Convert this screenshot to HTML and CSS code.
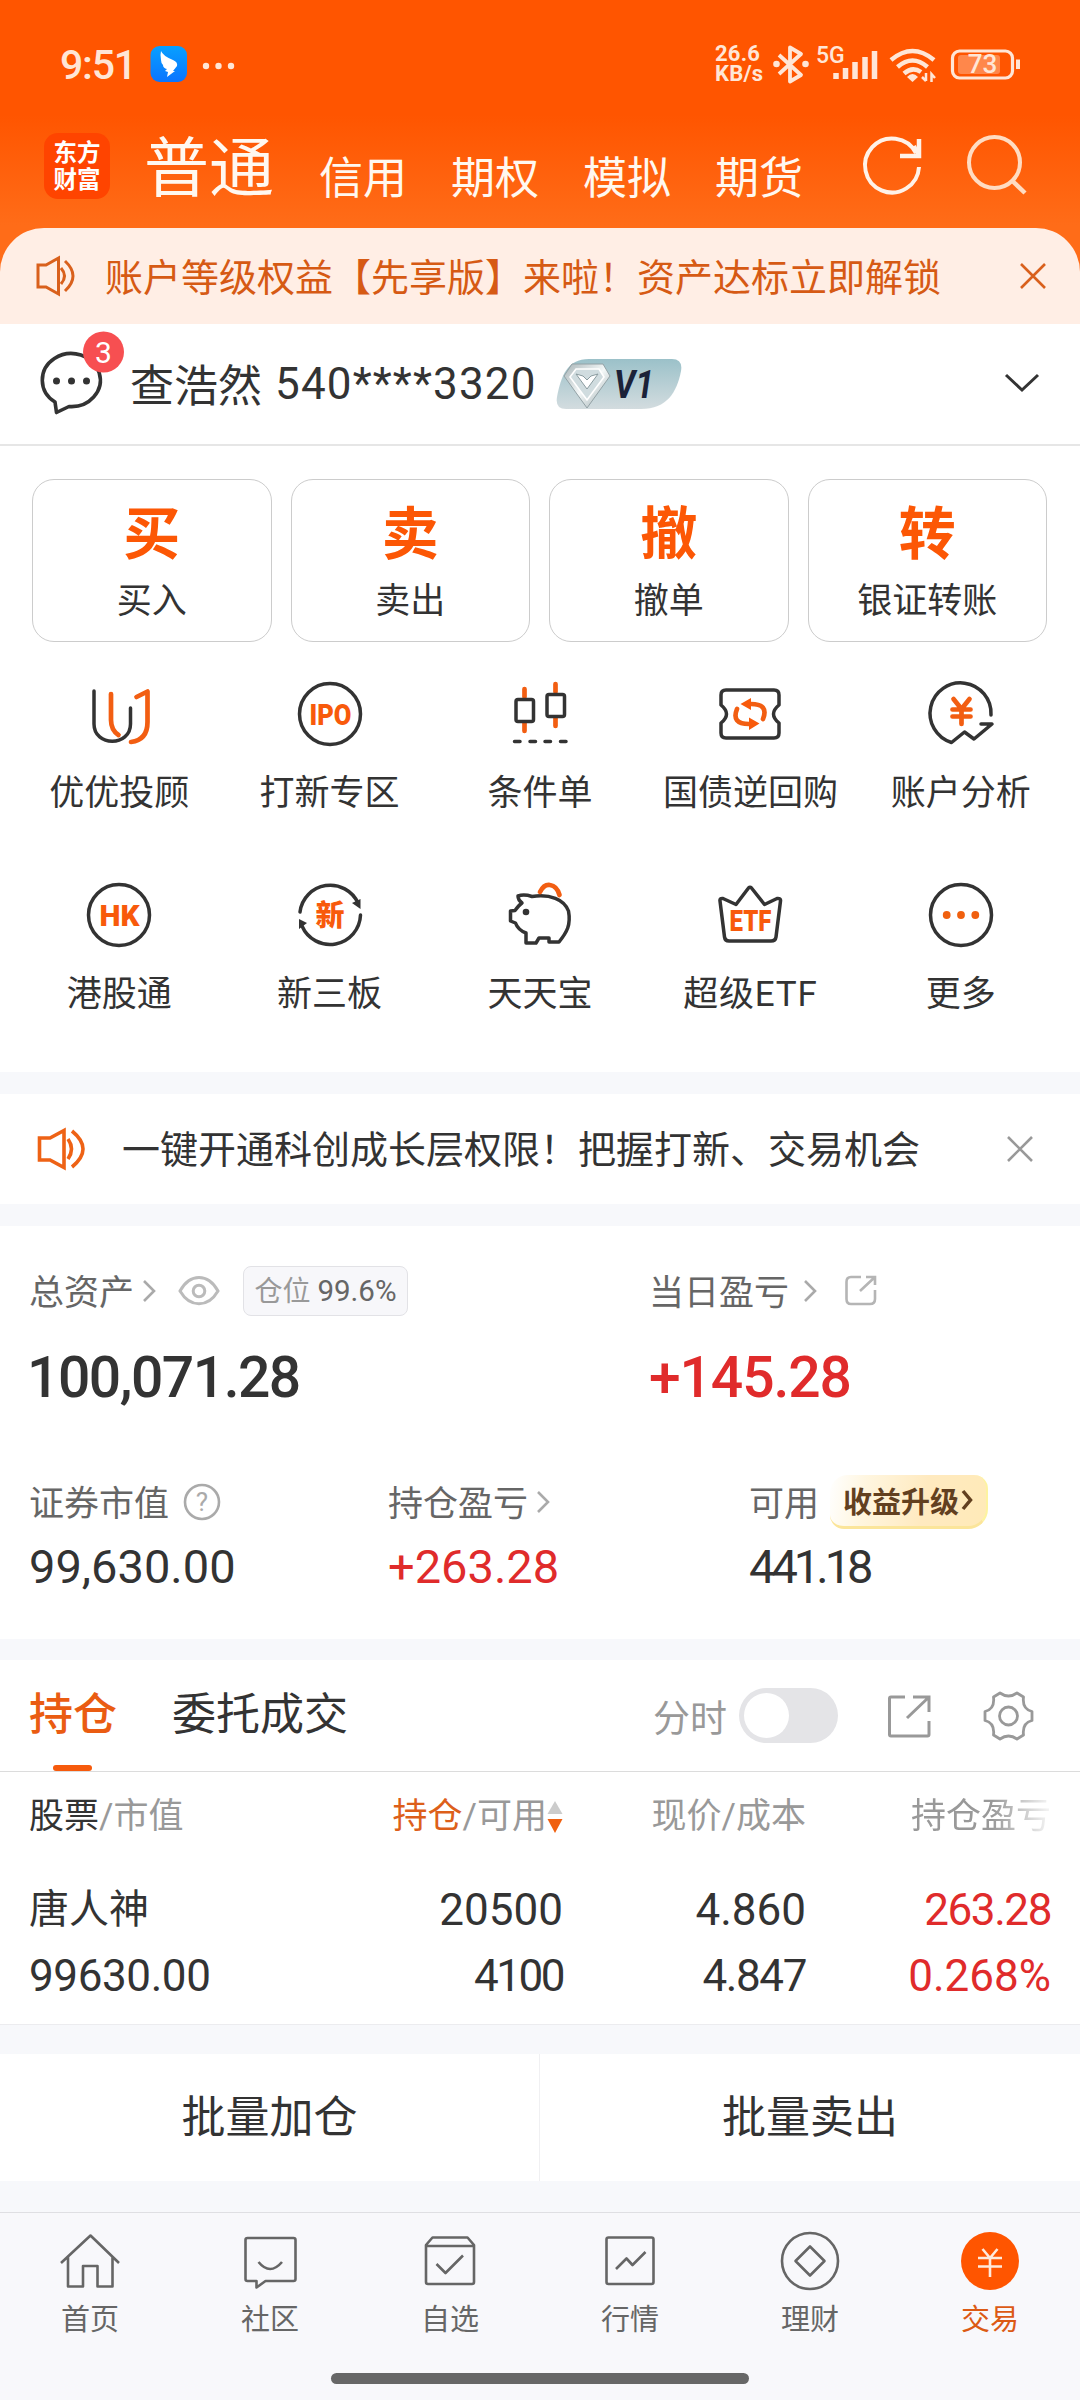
FILE: index.html
```html
<!DOCTYPE html>
<html lang="zh-CN">
<head>
<meta charset="utf-8">
<title>交易</title>
<link rel="stylesheet" href="styles.css">
</head>
<body>
<div class="app">
  <header class="header">
    <div class="status">
      <span class="clock">9:51</span>
      <svg class="ding" width="37" height="37" viewBox="150 46 37 37"><defs><linearGradient id="dg" x1="0" y1="0" x2="0" y2="1"><stop offset="0" stop-color="#08a0ff"/><stop offset="1" stop-color="#0a74ff"/></linearGradient></defs><rect x="150.500" y="46" width="36.500" height="36" rx="9" fill="url(#dg)"/><path d="M161 51Q163 56 173 60Q178 62 177 66L173 71H175L167 77L168 72L165 71L167 69Q163 68 163 65Q161 63 161 60Q160 55 161 51Z" fill="#fff"/></svg>
      <svg class="dots" width="33" height="8" viewBox="0 0 33 8" fill="#ffe6d6"><circle cx="4" cy="4" r="3.200"/><circle cx="16.500" cy="4" r="3.200"/><circle cx="29" cy="4" r="3.200"/></svg>
      <span class="speed">26.6<br>KB/s</span>
      <svg class="sig" width="250" height="44" viewBox="772 42 250 44" fill="none" stroke="#ffe6d6">
        <path d="M779 55L801 75L790 81.500V47.500L801 54L779 74" stroke-width="3.800" stroke-linejoin="round"/>
        <circle cx="776.500" cy="64" r="3.300" fill="#ffe6d6" stroke="none"/><circle cx="805.500" cy="64" r="3.300" fill="#ffe6d6" stroke="none"/>
        <text x="816" y="62.500" class="net">5G</text>
        <path d="M836 79V73M845.500 79V68M855 79V62M865 79V57M874.500 79V51" stroke-width="5.500"/>
        <path d="M891 60Q912.500 42 934 60" stroke-width="4.500"/><path d="M897.500 67Q912.500 54 927.500 67" stroke-width="4.500"/><path d="M904 73.500Q912.500 66 921 72" stroke-width="4.500"/><path d="M907 77Q912.500 71 918 77L912.500 82Z" fill="#ffe6d6" stroke="none"/>
        <path d="M926 73V81M922 77L926 81M931.500 82V74L935 78" stroke-width="2.500"/>
        <rect x="952.500" y="51" width="60" height="27" rx="7" stroke-width="3.200"/><rect x="958" y="55" width="42" height="19" rx="3" fill="#ff874b" stroke="none"/><path d="M1018 59.500V69" stroke-width="4"/>
        <text x="982.500" y="73" class="batt" text-anchor="middle">73</text>
      </svg>
    </div>
    <div class="topnav">
      <div class="logo">东方<br>财富</div>
      <span class="mode mode-on">普通</span>
      <span class="mode">信用</span><span class="mode">期权</span><span class="mode">模拟</span><span class="mode">期货</span>
      <svg class="tools" width="170" height="66" viewBox="860 133 170 66" fill="none" stroke="#fff2e8" stroke-width="4"><path d="M919 167A27 27 0 1 1 916 153"/><path d="M919 139V156H900" stroke-width="4.500"/><path d="M914 146L919 156"/><circle cx="994.500" cy="162.500" r="25.500" stroke="#ffdcc2"/><path d="M1012 180.500L1025 193" stroke="#ffdcc2" stroke-width="4.500"/></svg>
    </div>
  </header>

  <div class="promo">
    <svg width="42" height="42" viewBox="36 255 42 42" fill="none" stroke="#d9601c" stroke-width="3"><path d="M38 265H46L58.500 258V294L46 287H38Z"/><path d="M61 268Q68 276 61 284"/><path d="M65 261Q81 276 65 291"/></svg>
    <span>账户等级权益【先享版】来啦！资产达标立即解锁</span>
    <svg class="x" width="26" height="26" viewBox="0 0 26 26" stroke="#d9601c" stroke-width="2.600"><path d="M1 1L25 25M25 1L1 25"/></svg>
  </div>

  <div class="account">
    <svg class="msg" width="90" height="90" viewBox="36 328 90 90"><g transform="translate(3 0)"><path d="M52 402A29 26.500 0 1 1 66 406.500L53.500 412.500Z" fill="none" stroke="#333" stroke-width="3.600" stroke-linejoin="round"/><g fill="#333"><circle cx="53.500" cy="381" r="3.500"/><circle cx="68.500" cy="381" r="3.500"/><circle cx="83.500" cy="381" r="3.500"/></g></g><circle cx="103.500" cy="352" r="20.500" fill="#f74f51"/><text x="103.500" y="362.500" class="count" text-anchor="middle">3</text></svg>
    <span class="who">查浩然</span><span class="acct">540****3320</span>
    <svg class="vip" width="126" height="52" viewBox="557 358 126 52"><defs><linearGradient id="vg" x1="0" y1="0" x2="0" y2="1"><stop offset="0" stop-color="#9bc1c9"/><stop offset="1" stop-color="#d3dcdf"/></linearGradient><linearGradient id="dm" x1="0" y1="0" x2="1" y2="1"><stop offset="0" stop-color="#a9b5b8"/><stop offset=".5" stop-color="#f4f8f8"/><stop offset="1" stop-color="#9aa9ad"/></linearGradient></defs><path d="M590 359H673Q684 359 682 371C678 392 668 409 642 409H567Q556 409 558 397C562 376 568 359 590 359Z" fill="url(#vg)"/><path d="M573 364H604L611 376L588 408L565 376Z" fill="url(#dm)" stroke="#93a2a6"/><path d="M577 369H600L605 377L588 400L571 377Z" fill="#d0dcdf" stroke="#fff" stroke-width="1.600"/><path d="M577 374L588 389L599 374L592 376L588 380L584 376Z" fill="#fff" stroke="#8b9ca0"/><text x="615" y="397.500" class="v1" textLength="40" lengthAdjust="spacingAndGlyphs">V1</text></svg>
    <svg class="down" width="36" height="20" viewBox="0 0 36 20" fill="none" stroke="#333" stroke-width="3"><path d="M2 2L18 17L34 2"/></svg>
  </div>

  <div class="cards">
    <div class="card"><b>买</b><span>买入</span></div>
    <div class="card"><b>卖</b><span>卖出</span></div>
    <div class="card"><b>撤</b><span>撤单</span></div>
    <div class="card"><b>转</b><span>银证转账</span></div>
  </div>

  <div class="grid">
    <div class="cell"><svg viewBox="84 679 70 70"><path class="k" d="M94 691V724C94 747 130.500 747 130.500 724V708"/><path class="o" d="M111 694V720Q111 730 118.500 735M136.500 697L147.500 691.500V722Q147.500 740 131 742"/></svg><span>优优投顾</span></div>
    <div class="cell"><svg viewBox="294 679 70 70"><circle class="k" cx="329" cy="714" r="30.500"/><text class="ot" x="329.500" y="724.500" textLength="42" lengthAdjust="spacingAndGlyphs">IPO</text></svg><span>打新专区</span></div>
    <div class="cell"><svg viewBox="505 679 70 70"><path class="o" d="M524.500 689V697M524.500 723V731M555.500 684V692M555.500 718V726"/><rect class="k" x="516" y="699.500" width="17.500" height="22" rx="2"/><rect class="k" x="547" y="694.500" width="17.500" height="22" rx="2"/><path class="k" d="M514.500 741.500H520M530 741.500H535.500M545 741.500H550.500M560.500 741.500H566"/></svg><span>条件单</span></div>
    <div class="cell"><svg viewBox="715 679 70 70"><path class="k" d="M726 690H774Q779 690 779 695V705Q768 714 779 723V733Q779 738 774 738H726Q721 738 721 733V723Q732 714 721 705V695Q721 690 726 690Z"/><path class="o" d="M737 709Q731 724 749 724M763 719Q769 704 751 704"/><path d="M740.500 704L751 698V710ZM759.500 723.500L749 717.500V730Z" fill="#f85a0b"/></svg><span>国债逆回购</span></div>
    <div class="cell"><svg viewBox="925 679 70 70"><path class="k" d="M990 715A30.500 30.500 0 1 0 950.500 742.500L963.500 732L973 739L991 724H980"/><path class="o" d="M952.500 699L960.500 709L968.500 699M951.500 709.500H969.500M951.500 716.500H969.500M960.500 709V724"/></svg><span>账户分析</span></div>
    <div class="cell"><svg viewBox="84 880 70 70"><circle class="k" cx="119" cy="915" r="30.500"/><text class="ot" x="119.500" y="925.500" textLength="40" lengthAdjust="spacingAndGlyphs">HK</text></svg><span>港股通</span></div>
    <div class="cell"><svg viewBox="294 880 70 70"><path class="k" d="M299 912A30.500 30.500 0 0 1 357 903M359.500 915A30.500 30.500 0 0 1 301 926"/><path d="M351 903L359.500 899V909ZM306 923L298 919V929Z" fill="#333"/><text class="ot zh" x="329" y="925.500">新</text></svg><span>新三板</span></div>
    <div class="cell"><svg viewBox="505 880 70 70"><path class="k" d="M518 896Q524 894 532 896.500C550 894 564 899 568.500 911C571 925 567 932 559 942H549V938H539L536 943H526V933Q518 930 515.500 923L510.500 921V911L515 910.500Q519 905 522 903Q518 900 518 896Z"/><circle cx="526" cy="912" r="3.300" fill="#333"/><path class="o" d="M540 892Q544 884 550 885Q557 886 559.500 895"/></svg><span>天天宝</span></div>
    <div class="cell"><svg viewBox="715 880 70 70"><path class="k" d="M720 901Q719.500 898 723 898.500L736 904.500L748.500 888Q750 886.500 751.500 888L764.500 904.500L777 898.500Q781 898 780.500 901L776 937Q775.500 941 771 941H729Q725 941 724.500 937Z"/><text class="ot" x="750.500" y="931" textLength="42" lengthAdjust="spacingAndGlyphs">ETF</text></svg><span class="etf">超级ETF</span></div>
    <div class="cell"><svg viewBox="925 880 70 70"><circle class="k" cx="960" cy="915" r="30.500"/><g fill="#f0600f"><circle cx="945.700" cy="915" r="3.900"/><circle cx="960" cy="915" r="3.900"/><circle cx="974.300" cy="915" r="3.900"/></g></svg><span>更多</span></div>
  </div>

  <div class="notice">
    <svg width="50" height="44" viewBox="36 1128 50 44" fill="none" stroke="#ee6215" stroke-width="3.600"><path d="M39.500 1139H50L64 1131.500V1168.500L50 1161H39.500Z"/><path d="M68 1140Q75 1150 68 1160"/><path d="M72 1132Q94 1150 72 1168"/></svg>
    <span>一键开通科创成长层权限！把握打新、交易机会</span>
    <svg class="x" width="26" height="26" viewBox="0 0 26 26" stroke="#999" stroke-width="2.600"><path d="M1 1L25 25M25 1L1 25"/></svg>
  </div>

  <div class="assets">
    <div class="row2">
      <div>
        <div class="lab"><span>总资产</span><svg class="chev c1" viewBox="0 0 14 24"><path d="M2 2L12 12L2 22"/></svg><svg class="eye" width="42" height="30" viewBox="178 1276 42 30" fill="none" stroke="#bbb" stroke-width="3"><path d="M180 1291C190 1273 208 1273 218 1291C208 1308 190 1308 180 1291Z"/><circle cx="199" cy="1291" r="5.800"/></svg><div class="pos">仓位 <i>99.6%</i></div></div>
        <div class="big">100,071.28</div>
      </div>
      <div>
        <div class="lab"><span>当日盈亏</span><svg class="chev c2" viewBox="0 0 14 24"><path d="M2 2L12 12L2 22"/></svg><svg class="share" width="34" height="32" viewBox="844 1276 34 32" fill="none" stroke="#b5b5b5" stroke-width="2.600"><path d="M861 1278H851Q846.500 1278 846.500 1283V1300Q846.500 1305 851 1305H870Q875 1305 875 1300V1291M860 1292L875 1278M866 1278H875V1286"/></svg></div>
        <div class="big plus red">+145.28</div>
      </div>
    </div>
    <div class="row3">
      <div><div class="lab"><span>证券市值</span><svg class="help" width="38" height="38" viewBox="0 0 38 38"><circle cx="19" cy="19" r="17" fill="none" stroke="#aaa" stroke-width="2.600"/><text x="19" y="28" text-anchor="middle">?</text></svg></div><div class="val">99,630.00</div></div>
      <div><div class="lab"><span>持仓盈亏</span><svg class="chev c1" viewBox="0 0 14 24"><path d="M2 2L12 12L2 22"/></svg></div><div class="val red">+263.28</div></div>
      <div><div class="lab"><span>可用</span><div class="up">收益升级<svg width="12" height="22" viewBox="0 0 12 22"><path d="M2 2L9.500 11L2 20" fill="none" stroke="#62401f" stroke-width="3.500"/></svg></div></div><div class="val tight">441.18</div></div>
    </div>
  </div>

  <div class="tabs">
    <span class="tab on">持仓</span><span class="tab">委托成交</span>
    <span class="fs">分时</span><div class="toggle"></div>
    <svg class="exp" width="44" height="44" viewBox="888 1693 44 44" fill="none" stroke="#999" stroke-width="3"><path d="M906 1696H892Q890.500 1696 890.500 1697.500V1733.500Q890.500 1735 892 1735H928.500Q930 1735 930 1733.500V1720M908 1717L930 1696M914 1696H930V1711"/></svg>
    <svg width="52" height="52" viewBox="982 1690 52 52" fill="none" stroke="#999" stroke-width="2.800" stroke-linejoin="round"><path d="M1000 1693Q1008.500 1699 1017 1693L1023.500 1697Q1022 1709 1032 1711.500V1720.500Q1022 1723 1023.500 1735L1017 1739Q1008.500 1733 1000 1739L993.500 1735Q995 1723 985 1720.500V1711.500Q995 1709 993.500 1697Z"/><circle cx="1008.500" cy="1716" r="9"/></svg>
  </div>

  <div class="table">
    <div class="tr th"><span><em>股票</em>/市值</span><span><em class="or">持仓</em>/可用<svg width="16" height="34" viewBox="0 0 16 34"><path d="M8 1L15.500 14H.500Z" fill="#ccc"/><path d="M8 33L15.500 19H.500Z" fill="#f0600f"/></svg></span><span>现价/成本</span><span class="fade">持仓盈亏</span></div>
    <div class="tr r1"><span class="name">唐人神</span><span>20500</span><span>4.860</span><span class="red n1">263.28</span></div>
    <div class="tr r2"><span class="n0">99630.00</span><span class="n2">4100</span><span class="n1">4.847</span><span class="red">0.268%</span></div>
  </div>

  <div class="batch"><span>批量加仓</span><span>批量卖出</span></div>

  <nav class="nav">
    <div><svg viewBox="59.500 2231 60 60"><path d="M60.500 2263L90 2235.500L118.500 2263M67.500 2257V2286.500H82.500V2266H97V2286.500H112V2257"/></svg><span>首页</span></div>
    <div><svg viewBox="239.500 2231 60 60"><path d="M247 2238H293Q295 2238 295 2240V2279Q295 2281 293 2281H265L256 2287.500V2281H247Q245 2281 245 2279V2240Q245 2238 247 2238Z"/><path d="M258 2262Q269.500 2276 281.500 2262"/></svg><span>社区</span></div>
    <div><svg viewBox="419.500 2231 60 60"><path d="M425.500 2245L432 2237.500H467L473.500 2245V2282Q473.500 2284 471.500 2284H427.500Q425.500 2284 425.500 2282ZM425.500 2246H473.500M436 2264L445 2273L462.500 2255.500"/></svg><span>自选</span></div>
    <div><svg viewBox="599.500 2231 60 60"><rect x="606" y="2237.500" width="47" height="46.500" rx="2"/><path d="M615.500 2269L626 2258.500L632 2265L645 2252"/></svg><span>行情</span></div>
    <div><svg viewBox="779.500 2231 60 60"><circle cx="809.500" cy="2261" r="28"/><path d="M809.500 2246.500L824 2261L809.500 2275.500L795 2261Z"/></svg><span>理财</span></div>
    <div class="cur"><svg viewBox="959.500 2231 60 60"><circle cx="989.500" cy="2261" r="29" fill="#ff5500" stroke="none"/><path d="M982 2249L989.500 2258L997 2249M977.500 2258H1001.500M977.500 2266.500H1001.500M989.500 2258V2277" stroke="#ffe9dc"/></svg><span>交易</span></div>
  </nav>
  <div class="home"><i></i></div>
</div>
</body>
</html>
```
FILE: styles.css
```css
* { box-sizing: border-box; }
body { margin: 0; background: #f7f8fb; }
.app { width: 1080px; height: 2400px; overflow: hidden; font-family: Roboto, "Noto Sans CJK SC", sans-serif; color: #333; display: flex; flex-direction: column; }
.app > * { flex: none; }
svg { flex: none; display: block; }
i, em { font-style: normal; }
span { white-space: nowrap; }
.red { color: #e02b2b; }

.header { height: 272px; margin-bottom: -44px; background: linear-gradient(#ff5500 0, #ff5500 115px, #ff6c18 225px); }
.status { height: 128px; padding: 0 58px 0 60px; display: flex; align-items: center; color: #ffe6d6; }
.clock { font-size: 41px; font-weight: 500; line-height: 48px; letter-spacing: -1.200px; width: 90px; padding-top: 2px; }
.dots { margin: 4px 0 0 15px; }
.speed { margin-left: 480px; width: 57px; font-size: 22px; line-height: 20px; font-weight: 700; letter-spacing: .2px; }
.net { font-size: 23px; font-weight: 500; fill: #ffe6d6; stroke: none; }
.batt { font-size: 26px; font-weight: 500; fill: #ffe6d6; stroke: none; }
.topnav { height: 100px; padding: 5px 48px 0 44px; display: flex; align-items: flex-start; color: #fff8f0; }
.logo { width: 66px; height: 66px; border-radius: 14px; background: #ff4400; color: #fff; font: 700 23.500px/27px "Noto Sans CJK SC", sans-serif; text-align: center; padding-top: 5px; }
.mode { font-size: 44px; line-height: 52px; margin: 20px 44px 0 0; }
.mode-on { font-size: 65px; line-height: 68px; margin: 2px 45px 0 34px; }
.tools { margin-left: 13px; }

.promo { height: 96px; border-radius: 44px 44px 0 0; background: #ffeee5; color: #d65a14; display: flex; align-items: center; padding: 0 34px 0 36px; font-size: 38px; }
.promo span { margin: -4px 0 0 27px; }
.x { margin-left: auto; }

.account { height: 122px; background: #fff; border-bottom: 2px solid #e6e6e6; display: flex; align-items: center; padding: 0 40px 0 36px; font-size: 44px; }
.msg { margin-top: -22px; }
.who { margin: -3px 0 0 4px; }
.acct { margin-left: 13px; width: 264px; letter-spacing: 1.150px; }
.vip { margin-left: 17px; }
.count { font-size: 30px; fill: #fff; }
.v1 { font-size: 38px; font-style: italic; font-weight: 700; fill: #1b2238; }
.down { margin-left: auto; margin-top: -2px; }

.cards { height: 196px; background: #fff; padding: 33px 33px 0 32px; display: grid; grid-template-columns: repeat(4, 1fr); gap: 19px; }
.card { height: 163px; border: 1.500px solid #ccc; border-radius: 22px; display: flex; flex-direction: column; align-items: center; }
.card b { font-size: 57px; line-height: 64px; margin-top: 23px; color: #fc5705; }
.card span { font-size: 35px; line-height: 40px; margin-top: 15px; }

.grid { height: 430px; background: #fff; padding: 37px 14px 0; display: grid; grid-template-columns: repeat(5, 1fr); grid-auto-rows: 201px; }
.cell { display: flex; flex-direction: column; align-items: center; font-size: 35px; }
.cell svg { width: 70px; height: 70px; fill: none; }
.cell span { line-height: 40px; margin-top: 25px; }
.cell .etf { letter-spacing: .8px; }
.k { fill: none; stroke: #333; stroke-width: 3.500; stroke-linecap: round; stroke-linejoin: round; }
.o { fill: none; stroke: #f25e12; stroke-width: 4.700; stroke-linecap: round; stroke-linejoin: round; }
.ot { font-size: 29px; font-weight: 900; fill: #f85a0b; text-anchor: middle; }
.zh { font-size: 29px; }

.notice { margin-top: 22px; height: 110px; background: #fff; display: flex; align-items: center; padding: 0 47px 0 36px; font-size: 38px; }
.notice span { margin: -5px 0 0 36px; }

.assets { margin-top: 22px; height: 413px; background: #fff; padding: 40px 0 0 29px; }
.row2 { display: grid; grid-template-columns: 620px 1fr; height: 206px; }
.row3 { display: grid; grid-template-columns: 359px 361px 1fr; padding-top: 5px; }
.lab { display: flex; align-items: center; height: 50px; font-size: 35px; color: #666; }
.lab > span { margin-top: -4px; }
.big { font-size: 57px; font-weight: 500; line-height: 64px; margin: 30px 0 0 -2px; letter-spacing: -1.500px; }
.plus { margin-left: 0; letter-spacing: -1.100px; }
.val { font-size: 47px; line-height: 54px; margin-top: 13px; }
.tight { letter-spacing: -4px; }
.chev { width: 14px; height: 24px; fill: none; stroke: #aaa; stroke-width: 2.600; }
.c1 { margin-left: 8px; }
.c2 { margin-left: 14px; }
.eye { margin-left: 22px; }
.pos { margin-left: 23px; height: 50px; width: 165px; border: 1px solid #e2e2e6; border-radius: 8px; background: #f7f7fa; font-size: 28px; line-height: 48px; text-align: center; color: #999; white-space: nowrap; }
.pos i { font-size: 29.500px; color: #666; }
.share { margin-left: 27px; }
.help { margin-left: 14px; }
.help text { font-size: 26px; fill: #aaa; }
.up { margin-left: 11px; height: 54px; width: 158px; padding-bottom: 2px; border-radius: 18px 14px 20px 14px; background: linear-gradient(100deg, #fff 0, #fff6e0 22%, #ffeac0 60%, #ffeab8 100%); border-bottom: 3px solid #fbe59a; border-right: 2px solid #fdf3a0; color: #62401f; font-size: 29px; font-weight: 700; display: flex; align-items: center; justify-content: center; gap: 2px; }

.tabs { margin-top: 21px; height: 112px; background: #fff; border-bottom: 1px solid #dcdcdc; display: flex; align-items: center; padding: 0 46px 0 29px; font-size: 44px; }
.tab { line-height: 111px; margin-right: 55px; position: relative; }
.on { color: #ea5c12; font-weight: 500; }
.on::after { content: ""; position: absolute; left: 24px; bottom: 0; width: 39px; height: 6px; border-radius: 3px; background: #f65a0c; }
.fs { margin-left: auto; font-size: 37px; color: #999; }
.toggle { width: 99px; height: 55px; border-radius: 28px; background: #e4e4e7; margin: 0 49px 0 12px; padding: 5px; }
.toggle::before { content: ""; display: block; width: 45px; height: 45px; border-radius: 50%; background: #fff; }
.exp { margin-right: 51px; }

.table { height: 253px; background: #fff; padding-left: 29px; border-bottom: 1px solid #ececef; }
.tr { display: grid; grid-template-columns: 250px 284px 243px 245px; font-size: 44px; }
.tr span { text-align: right; }
.tr span:first-child { text-align: left; }
.th { font-size: 35px; line-height: 90px; height: 88px; color: #999; }
.th em { color: #333; }
.th .or { color: #dd5f1a; }
.th svg { display: inline-block; vertical-align: -6px; }
.th .fade { text-align: right; -webkit-mask-image: linear-gradient(90deg, #000 76%, transparent 102%); mask-image: linear-gradient(90deg, #000 76%, transparent 102%); }
.r1 { line-height: 66px; margin-top: 17px; }
.r2 { line-height: 66px; }
.tr .name { font-size: 40px; }
.n0 { letter-spacing: -.4px; }
.n1 { letter-spacing: -1.400px; }
.n2 { letter-spacing: -2.500px; }

.batch { margin-top: 29px; height: 127px; background: #fff; display: grid; grid-template-columns: 1fr 1fr; font-size: 44px; line-height: 129px; text-align: center; }
.batch span { height: 127px; }
.batch span:first-child { border-right: 1px solid #f0f0f2; }

.nav { margin-top: 31px; height: 128px; border-top: 1px solid #dfdfe3; background: #f8f8fb; display: grid; grid-template-columns: repeat(6, 1fr); font-size: 29px; color: #666; }
.nav div { display: flex; flex-direction: column; align-items: center; padding-top: 18px; }
.nav svg { width: 60px; height: 60px; fill: none; stroke: #666; stroke-width: 2.600; stroke-linejoin: round; }
.nav span { line-height: 36px; margin-top: 11px; }
.nav .cur { color: #dc5a14; }
.home { flex: 1 0 auto; background: #f8f8fb; display: flex; justify-content: center; padding-top: 33px; }
.home i { width: 418px; height: 11px; border-radius: 6px; background: #676767; }
```
